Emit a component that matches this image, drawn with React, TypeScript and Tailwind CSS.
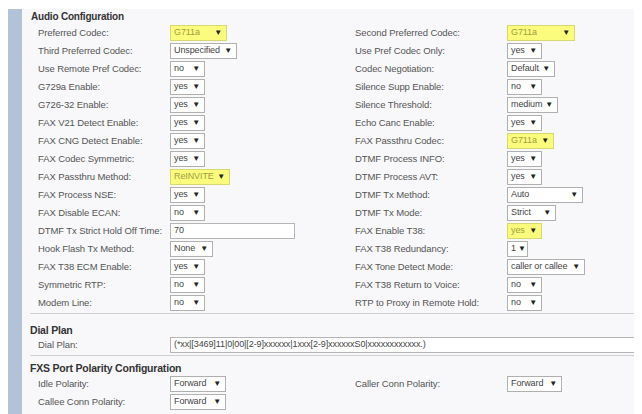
import React from 'react';

type Field =
  | { kind: 'select'; value: string; w: number; hl?: boolean }
  | { kind: 'input'; value: string; w: number };

type Row = { label: string; field: Field; rlabel?: string; rfield?: Field };

const sel = (value: string, w: number, hl = false): Field => ({ kind: 'select', value, w, hl });

const audioRows: Row[] = [
  { label: 'Preferred Codec:', field: sel('G711a', 57, true), rlabel: 'Second Preferred Codec:', rfield: sel('G711a', 68, true) },
  { label: 'Third Preferred Codec:', field: sel('Unspecified', 67), rlabel: 'Use Pref Codec Only:', rfield: sel('yes', 35) },
  { label: 'Use Remote Pref Codec:', field: sel('no', 35), rlabel: 'Codec Negotiation:', rfield: sel('Default', 48) },
  { label: 'G729a Enable:', field: sel('yes', 35), rlabel: 'Silence Supp Enable:', rfield: sel('no', 35) },
  { label: 'G726-32 Enable:', field: sel('yes', 35), rlabel: 'Silence Threshold:', rfield: sel('medium', 51) },
  { label: 'FAX V21 Detect Enable:', field: sel('yes', 35), rlabel: 'Echo Canc Enable:', rfield: sel('yes', 35) },
  { label: 'FAX CNG Detect Enable:', field: sel('yes', 35), rlabel: 'FAX Passthru Codec:', rfield: sel('G711a', 47, true) },
  { label: 'FAX Codec Symmetric:', field: sel('yes', 35), rlabel: 'DTMF Process INFO:', rfield: sel('yes', 35) },
  { label: 'FAX Passthru Method:', field: sel('ReINVITE', 60, true), rlabel: 'DTMF Process AVT:', rfield: sel('yes', 35) },
  { label: 'FAX Process NSE:', field: sel('yes', 35), rlabel: 'DTMF Tx Method:', rfield: sel('Auto', 76) },
  { label: 'FAX Disable ECAN:', field: sel('no', 35), rlabel: 'DTMF Tx Mode:', rfield: sel('Strict', 49) },
  { label: 'DTMF Tx Strict Hold Off Time:', field: { kind: 'input', value: '70', w: 125 }, rlabel: 'FAX Enable T38:', rfield: sel('yes', 35, true) },
  { label: 'Hook Flash Tx Method:', field: sel('None', 43), rlabel: 'FAX T38 Redundancy:', rfield: sel('1', 21) },
  { label: 'FAX T38 ECM Enable:', field: sel('yes', 35), rlabel: 'FAX Tone Detect Mode:', rfield: sel('caller or callee', 78) },
  { label: 'Symmetric RTP:', field: sel('no', 35), rlabel: 'FAX T38 Return to Voice:', rfield: sel('no', 35) },
  { label: 'Modem Line:', field: sel('no', 35), rlabel: 'RTP to Proxy in Remote Hold:', rfield: sel('no', 35) },
];

const polarityRows: Row[] = [
  { label: 'Idle Polarity:', field: sel('Forward', 56), rlabel: 'Caller Conn Polarity:', rfield: sel('Forward', 55) },
  { label: 'Callee Conn Polarity:', field: sel('Forward', 56) },
];

function Control({ field }: { field: Field }) {
  if (field.kind === 'input') {
    return (
      <div
        className="flex h-[16px] items-center border border-[#b5b5b5] bg-white px-[3px] text-[9px] text-[#444]"
        style={{ width: field.w }}
      >
        {field.value}
      </div>
    );
  }
  return (
    <div
      className={`flex h-[16px] items-center justify-between gap-[2px] border pl-[3px] pr-[4px] text-[9px] ${
        field.hl ? 'border-[#d8d870] bg-[#fbfb7e] text-[#a0a040]' : 'border-[#b0b0b0] bg-white text-[#444]'
      }`}
      style={{ width: field.w }}
    >
      <span className="whitespace-nowrap">{field.value}</span>
      <span className="text-[8px] leading-none text-[#222]">▼</span>
    </div>
  );
}

function FieldRow({ row }: { row: Row }) {
  return (
    <div className="grid h-[18px] grid-cols-[132px_185px_152px_1fr] items-center pl-[16px]">
      <span className="whitespace-nowrap text-[#555]">{row.label}</span>
      <div>
        <Control field={row.field} />
      </div>
      <span className="whitespace-nowrap text-[#555]">{row.rlabel ?? ''}</span>
      <div>{row.rfield ? <Control field={row.rfield} /> : null}</div>
    </div>
  );
}

export default function App() {
  return (
    <div
      className="flex h-[414px] w-[642px] overflow-hidden bg-white pl-[8px] pr-[8px] pt-[9px] text-[9.5px] tracking-[-0.1px]"
      style={{ fontFamily: '"Liberation Sans", Arial, sans-serif' }}
    >
      <div className="w-[14px] shrink-0 bg-[#b3c3d7]" />
      <div className="flex-1 bg-[#f8f8fa]">
        <section>
          <div className="pl-[9px] text-[10px] font-bold leading-[15px] tracking-[-0.2px] text-[#333]">
            Audio Configuration
          </div>
          {audioRows.map((r) => (
            <FieldRow key={r.label} row={r} />
          ))}
        </section>
        <div className="ml-[8px] mt-[1px] border-t border-[#cfcfd4]" />
        <section className="pt-[10px]">
          <div className="pl-[8px] text-[10.5px] font-bold leading-[12px] tracking-[-0.2px] text-[#333]">
            Dial Plan
          </div>
          <div className="grid h-[18px] grid-cols-[132px_1fr] items-center pl-[16px]">
            <span className="text-[#555]">Dial Plan:</span>
            <div className="flex h-[16px] items-center whitespace-nowrap border border-r-0 border-[#b5b5b5] bg-white px-[3px] text-[9px] text-[#444]">
              (*xx|[3469]11|0|00|[2-9]xxxxxx|1xxx[2-9]xxxxxxS0|xxxxxxxxxxxx.)
            </div>
          </div>
        </section>
        <div className="ml-[8px] mt-[1px] border-t border-[#cfcfd4]" />
        <section className="pt-[5px]">
          <div className="pl-[8px] text-[10.5px] font-bold leading-[14px] tracking-[-0.2px] text-[#333]">
            FXS Port Polarity Configuration
          </div>
          {polarityRows.map((r) => (
            <FieldRow key={r.label} row={r} />
          ))}
        </section>
      </div>
    </div>
  );
}
